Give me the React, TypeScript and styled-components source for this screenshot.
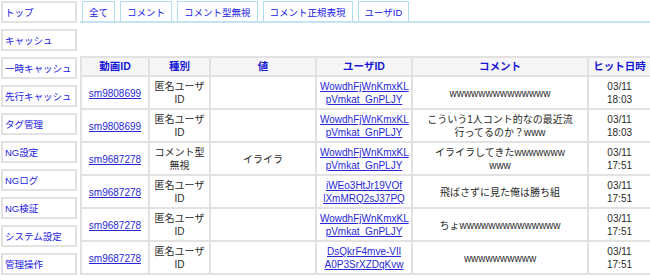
import React from 'react';
import styled, { createGlobalStyle } from 'styled-components';

const GlobalStyle = createGlobalStyle`
  body {
    margin: 0;
    padding: 0;
    background: #fff;
    font-family: "Liberation Sans", "Noto Sans CJK JP", sans-serif;
    font-size: 10px;
    color: #222;
  }
`;

const Page = styled.div`
  display: flex;
  align-items: flex-start;
  gap: 3px;
  padding: 1px 0 0 1px;
  width: 649px;
`;

const SideMenu = styled.nav`
  display: flex;
  flex-direction: column;
  gap: 6px;
  width: 76px;
  flex-shrink: 0;
`;

const SideButton = styled.a`
  display: flex;
  align-items: center;
  height: 22px;
  box-sizing: border-box;
  padding: 0 2px;
  border: 2px solid #e2e2e2;
  color: #2020e6;
  font-size: 9.5px;
  text-decoration: none;
  white-space: nowrap;
  overflow: hidden;
`;

const Main = styled.main`
  flex: 1;
  display: flex;
  flex-direction: column;
  gap: 33px;
  min-width: 0;
`;

const TabBar = styled.div`
  display: flex;
  gap: 5px;
  padding-left: 2px;
  border-bottom: 2px solid #c4e4f3;
`;

const Tab = styled.a`
  display: flex;
  align-items: center;
  height: 19px;
  padding: 0 6px;
  border: 1px solid #b3dcf0;
  border-bottom: none;
  color: #2020e6;
  font-size: 9.5px;
  text-decoration: none;
  white-space: nowrap;
`;

const Table = styled.table`
  width: 570px;
  border-collapse: collapse;
  border: 2px solid #e2e2e2;
  table-layout: fixed;
`;

const Col = styled.col<{ $w: number }>`
  width: ${(p) => p.$w}px;
`;

const Th = styled.th`
  height: 17px;
  padding: 0 2px;
  background: #f6f6f6;
  border: 2px solid #e2e2e2;
  color: #1616d6;
  font-size: 10.5px;
  line-height: 13px;
  font-weight: bold;
  text-align: center;
  white-space: nowrap;
`;

const Td = styled.td`
  height: 26px;
  padding: 3px 3px 2px;
  border: 2px solid #e2e2e2;
  text-align: center;
  vertical-align: middle;
  line-height: 13px;
  font-size: 10px;
  color: #2a2a2a;
  white-space: pre-line;
`;

const Link = styled.a`
  color: #2828d8;
  text-decoration: underline;
  font-size: 10px;
  line-height: 13px;
`;

type Row = {
  video: string;
  kind: string;
  value: string;
  user: string;
  comment: string;
  date: string;
  time: string;
};

const menu = ['トップ', 'キャッシュ', '一時キャッシュ', '先行キャッシュ', 'タグ管理', 'NG設定', 'NGログ', 'NG検証', 'システム設定', '管理操作'];
const tabs = ['全て', 'コメント', 'コメント型無視', 'コメント正規表現', 'ユーザID'];

const rows: Row[] = [
  { video: 'sm9808699', kind: '匿名ユーザID', value: '', user: 'WowdhFjWnKmxKL\npVmkat_GnPLJY', comment: 'wwwwwwwwwwwwww', date: '03/11', time: '18:03' },
  { video: 'sm9808699', kind: '匿名ユーザID', value: '', user: 'WowdhFjWnKmxKL\npVmkat_GnPLJY', comment: 'こういう1人コント的なの最近流\n行ってるのか？www', date: '03/11', time: '18:03' },
  { video: 'sm9687278', kind: 'コメント型無視', value: 'イライラ', user: 'WowdhFjWnKmxKL\npVmkat_GnPLJY', comment: 'イライラしてきたwwwwwww\nwww', date: '03/11', time: '17:51' },
  { video: 'sm9687278', kind: '匿名ユーザID', value: '', user: 'iWEo3HtJr19VOf\nlXmMRQ2sJ37PQ', comment: '飛ばさずに見た俺は勝ち組', date: '03/11', time: '17:51' },
  { video: 'sm9687278', kind: '匿名ユーザID', value: '', user: 'WowdhFjWnKmxKL\npVmkat_GnPLJY', comment: 'ちょwwwwwwwwwwwwww', date: '03/11', time: '17:51' },
  { video: 'sm9687278', kind: '匿名ユーザID', value: '', user: 'DsQkrF4mve-VIl\nA0P3SrXZDqKvw', comment: 'wwwwwwwwww', date: '03/11', time: '17:51' },
];

export default function App() {
  return (
    <>
      <GlobalStyle />
      <Page>
        <SideMenu>
          {menu.map((m) => (
            <SideButton key={m} href="#">{m}</SideButton>
          ))}
        </SideMenu>
        <Main>
          <TabBar>
            {tabs.map((t) => (
              <Tab key={t} href="#">{t}</Tab>
            ))}
          </TabBar>
          <Table>
            <colgroup>
              <Col $w={68} />
              <Col $w={61} />
              <Col $w={106} />
              <Col $w={96} />
              <Col $w={176} />
              <Col $w={63} />
            </colgroup>
            <thead>
              <tr>
                <Th>動画ID</Th>
                <Th>種別</Th>
                <Th>値</Th>
                <Th>ユーザID</Th>
                <Th>コメント</Th>
                <Th>ヒット日時</Th>
              </tr>
            </thead>
            <tbody>
              {rows.map((r, i) => (
                <tr key={i}>
                  <Td><Link href="#">{r.video}</Link></Td>
                  <Td>{r.kind}</Td>
                  <Td>{r.value}</Td>
                  <Td><Link href="#">{r.user}</Link></Td>
                  <Td>{r.comment}</Td>
                  <Td>{r.date}{'\n'}{r.time}</Td>
                </tr>
              ))}
            </tbody>
          </Table>
        </Main>
      </Page>
    </>
  );
}
